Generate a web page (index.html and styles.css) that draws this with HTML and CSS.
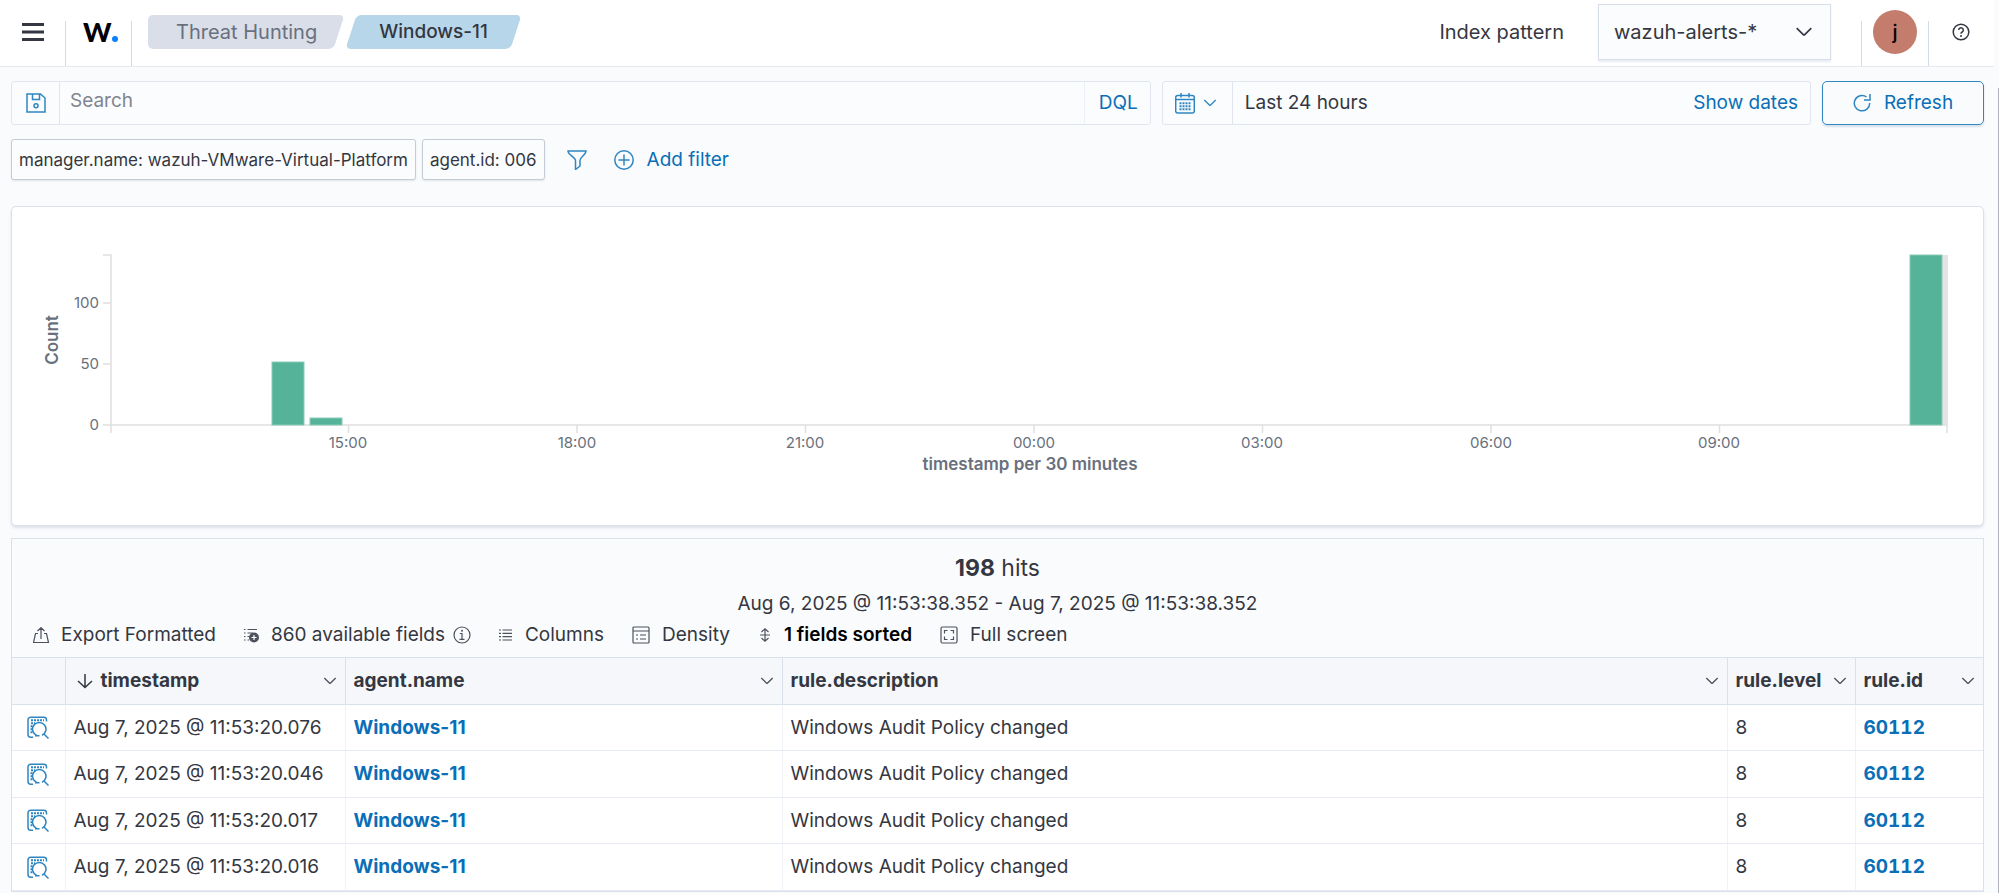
FILE: index.html
```html
<!DOCTYPE html>
<html lang="en">

<head>
    <meta charset="UTF-8">
    <meta name="viewport" content="width=device-width, initial-scale=1.0">
    <title>Threat Hunting</title>
    <link rel="stylesheet" href="styles.css">
</head>

<body>
    <!-- shared icons -->
    <svg class="sprite" aria-hidden="true">
        <symbol id="chevron" viewBox="0 0 16 16">
            <path d="M1.500 4.500L7.600 10.600a.6.6 0 0 0 .8 0L14.500 4.500" />
        </symbol>
        <symbol id="inspect" viewBox="0 0 22 23">
            <path d="M19.500 5.500V4a2.700 2.700 0 0 0-2.700-2.700H3.700A2.700 2.700 0 0 0 1 4v14.500A2.700 2.700 0 0 0 3.700 21.200H6" />
            <path class="dots" d="M4 4.300h13M4 7.300h4M3.500 10.300h2M3.500 13.300h2M3.500 16.300h2" />
            <path d="M9.500 19.300a6.700 6.700 0 1 1 5.500 0M8 19.800h4.500M17 18l4.500 4.500" />
        </symbol>
    </svg>

    <header class="topbar">
        <button class="menu-btn" aria-label="Menu">
            <svg width="22" height="18" viewBox="0 0 22 18"><path d="M0 1.500h22M0 9h22M0 16.500h22" /></svg>
        </button>
        <a class="logo" href="#">W<span></span></a>
        <nav class="crumbs">
            <a class="crumb crumb-first" href="#">Threat Hunting</a>
            <a class="crumb crumb-last" href="#">Windows-11</a>
        </nav>
        <label class="pattern-label" for="pattern">Index pattern</label>
        <div class="pattern">
            <select id="pattern">
                <option>wazuh-alerts-*</option>
            </select>
            <svg class="chevron" width="18" height="18"><use href="#chevron" /></svg>
        </div>
        <div class="user">
            <button class="avatar">j</button>
        </div>
        <button class="help" aria-label="Help">
            <svg width="18" height="18" viewBox="0 0 18 18">
                <circle cx="9" cy="9" r="7.800" />
                <path d="M6.700 7a2.300 2.300 0 1 1 3.500 2c-.8.500-1.200.9-1.200 1.800" />
                <circle class="dot" cx="9" cy="13" r="1" />
            </svg>
        </button>
    </header>

    <main>
        <div class="query">
            <div class="search">
                <button class="save" aria-label="Saved queries">
                    <svg width="20" height="20" viewBox="0 0 20 20">
                        <path d="M1 1h13.500l4.500 4v14H1zM6.500 1v5.500h7V1" />
                        <circle cx="10" cy="12.800" r="2" />
                    </svg>
                </button>
                <input type="text" placeholder="Search" aria-label="Search">
                <button class="dql">DQL</button>
            </div>
            <div class="dates">
                <button class="quick" aria-label="Date quick select">
                    <svg width="20" height="21" viewBox="0 0 20 21">
                        <rect x=".7" y="2.500" width="18.600" height="17.600" rx="2" />
                        <path d="M1 6.500h18M6 0v4.500M14 0v4.500" />
                        <path class="dots" d="M4.500 10.200h11M4.500 13.200h11M4.500 16.200h11" />
                    </svg>
                    <svg class="chevron" width="14" height="14"><use href="#chevron" /></svg>
                </button>
                <button class="range">Last 24 hours</button>
                <button class="show">Show dates</button>
            </div>
            <button class="refresh">
                <svg width="18" height="18" viewBox="0 0 18 18">
                    <path d="M13.500 2.900A7.700 7.700 0 1 0 16.700 9M17 0v6h-6" />
                </svg>
                Refresh
            </button>
        </div>

        <div class="filters">
            <button class="pill">manager.name: wazuh-VMware-Virtual-Platform</button>
            <button class="pill">agent.id: 006</button>
            <button class="funnel" aria-label="Filter options">
                <svg width="20" height="20" viewBox="0 0 20 20">
                    <path d="M1 1h18c0 4-6 6-6 9.500V16l-4.500 3.500v-9C8.500 7 1 5 1 1z" />
                </svg>
            </button>
            <button class="add">
                <svg width="20" height="20" viewBox="0 0 20 20">
                    <circle cx="10" cy="10" r="9.200" />
                    <path d="M4.500 10h11M10 4.500v11" />
                </svg>
                Add filter
            </button>
        </div>

        <section class="panel chart">
            <svg viewBox="0 0 1971 318" role="img" aria-label="Count, timestamp per 30 minutes">
                <rect class="partial" x="1930" y="48" width="6" height="170" />
                <g class="axis">
                    <path d="M91 48h8v178M91 96h8M91 157h8M91 218h1844v8" />
                    <path d="M336.500 218v8M565 218v8M793.500 218v8M1022 218v8M1250.500 218v8M1479 218v8M1707.500 218v8" />
                </g>
                <g class="bars">
                    <rect x="260" y="155" width="32" height="63" />
                    <rect x="298" y="211" width="32" height="7" />
                    <rect x="1898" y="48" width="32" height="170" />
                </g>
                <g class="ylabels">
                    <text x="87" y="101">100</text>
                    <text x="87" y="162">50</text>
                    <text x="87" y="223">0</text>
                </g>
                <g class="xlabels">
                    <text x="336" y="241">15:00</text>
                    <text x="565" y="241">18:00</text>
                    <text x="793" y="241">21:00</text>
                    <text x="1022" y="241">00:00</text>
                    <text x="1250" y="241">03:00</text>
                    <text x="1479" y="241">06:00</text>
                    <text x="1707" y="241">09:00</text>
                </g>
                <text class="title" x="1018" y="263">timestamp per 30 minutes</text>
                <text class="title" transform="translate(46 133) rotate(-90)">Count</text>
            </svg>
        </section>

        <section class="results">
            <div class="hits"><strong>198</strong> hits</div>
            <div class="period">Aug 6, 2025 @ 11:53:38.352 - Aug 7, 2025 @ 11:53:38.352</div>

            <div class="toolbar">
                <button>
                    <svg width="16" height="16" viewBox="0 0 16 16"><path d="M5 6.500H2.500l-2 9h15l-2-9H11M8 12V1M4.500 4L8 .7 11.500 4" /></svg>
                    Export Formatted
                </button>
                <button>
                    <svg width="15" height="16" viewBox="0 0 15 16">
                        <path d="M0 2.500h1.500M3.500 2.500H13M0 6h1.500M3.500 6h5M0 9.500h1.500M3.500 9.500H5M0 13h1.500M3.500 13H5" />
                        <circle class="solid" cx="10" cy="10.500" r="5" />
                        <path class="plus" d="M10 8v5M7.500 10.500h5" />
                    </svg>
                    860 available fields
                    <svg class="info" width="18" height="18" viewBox="0 0 18 18">
                        <circle cx="9" cy="9" r="8" />
                        <path d="M6.800 7.500H9v5.500M6.500 13.300h5" />
                        <circle class="solid" cx="9" cy="4.800" r="1" />
                    </svg>
                </button>
                <button>
                    <svg width="14" height="16" viewBox="0 0 14 16"><path d="M0 3h2M3.500 3H13M0 6.300h2M3.500 6.300H13M0 9.600h2M3.500 9.600H13M0 13h2M3.500 13H13" /></svg>
                    Columns
                </button>
                <button>
                    <svg width="18" height="18" viewBox="0 0 18 18">
                        <rect x="1" y="1" width="16" height="16" rx="1" />
                        <path d="M1 5h16M4 9h2M8 9h6M4 13h2M8 13h6" />
                    </svg>
                    Density
                </button>
                <button class="sorted">
                    <svg width="14" height="16" viewBox="0 0 14 16"><path d="M7 2v12M3.500 5L7 1.700 10.500 5M3.500 11L7 14.300l3.500-3.300M2 8h10" /></svg>
                    1 fields sorted
                </button>
                <button>
                    <svg width="18" height="18" viewBox="0 0 18 18">
                        <rect x="1" y="1" width="16" height="16" rx="1.500" />
                        <path d="M4.500 7.500v-3h3M10.500 4.500h3v3M13.500 10.500v3h-3M7.500 13.500h-3v-3" />
                    </svg>
                    Full screen
                </button>
            </div>

            <table>
                <colgroup>
                    <col class="c-open">
                    <col class="c-time">
                    <col class="c-agent">
                    <col>
                    <col class="c-short">
                    <col class="c-short">
                </colgroup>
                <thead>
                    <tr>
                        <th></th>
                        <th>
                            <div class="head">
                                <svg class="sort" width="16" height="16" viewBox="0 0 16 16"><path d="M8 1v13.500M1 8l7 6.500L15 8" /></svg>
                                <span>timestamp</span>
                                <svg class="chevron" width="14" height="14"><use href="#chevron" /></svg>
                            </div>
                        </th>
                        <th><div class="head"><span>agent.name</span><svg class="chevron" width="14" height="14"><use href="#chevron" /></svg></div></th>
                        <th><div class="head"><span>rule.description</span><svg class="chevron" width="14" height="14"><use href="#chevron" /></svg></div></th>
                        <th><div class="head"><span>rule.level</span><svg class="chevron" width="14" height="14"><use href="#chevron" /></svg></div></th>
                        <th><div class="head"><span>rule.id</span><svg class="chevron" width="14" height="14"><use href="#chevron" /></svg></div></th>
                    </tr>
                </thead>
                <tbody>
                    <tr>
                        <td><button class="open" aria-label="Inspect document"><svg width="22" height="23"><use href="#inspect" /></svg></button></td>
                        <td>Aug 7, 2025 @ 11:53:20.076</td>
                        <td><a href="#">Windows-11</a></td>
                        <td>Windows Audit Policy changed</td>
                        <td>8</td>
                        <td class="num"><a href="#">60112</a></td>
                    </tr>
                    <tr>
                        <td><button class="open" aria-label="Inspect document"><svg width="22" height="23"><use href="#inspect" /></svg></button></td>
                        <td>Aug 7, 2025 @ 11:53:20.046</td>
                        <td><a href="#">Windows-11</a></td>
                        <td>Windows Audit Policy changed</td>
                        <td>8</td>
                        <td class="num"><a href="#">60112</a></td>
                    </tr>
                    <tr>
                        <td><button class="open" aria-label="Inspect document"><svg width="22" height="23"><use href="#inspect" /></svg></button></td>
                        <td>Aug 7, 2025 @ 11:53:20.017</td>
                        <td><a href="#">Windows-11</a></td>
                        <td>Windows Audit Policy changed</td>
                        <td>8</td>
                        <td class="num"><a href="#">60112</a></td>
                    </tr>
                    <tr>
                        <td><button class="open" aria-label="Inspect document"><svg width="22" height="23"><use href="#inspect" /></svg></button></td>
                        <td>Aug 7, 2025 @ 11:53:20.016</td>
                        <td><a href="#">Windows-11</a></td>
                        <td>Windows Audit Policy changed</td>
                        <td>8</td>
                        <td class="num"><a href="#">60112</a></td>
                    </tr>
                </tbody>
            </table>
        </section>
    </main>
    <div class="scrollbar"></div>
</body>

</html>
```

FILE: styles.css
```css
* {
    box-sizing: border-box;
}

body {
    margin: 0;
    padding-right: 5px;
    background-color: #fafbfd;
    color: #343741;
    font-family: Inter, "Liberation Sans", sans-serif;
    font-size: 19px;
    line-height: 28px;
}

button,
input,
select {
    margin: 0;
    padding: 0;
    border: 0;
    background: none;
    color: inherit;
    font: inherit;
}

button {
    display: flex;
    align-items: center;
    white-space: nowrap;
}

a {
    color: #0a6fb7;
    text-decoration: none;
}

svg {
    fill: none;
    stroke: currentColor;
    stroke-width: 1.5;
    flex-shrink: 0;
}

.sprite {
    display: none;
}

.dots {
    stroke-dasharray: 2 1;
    stroke-width: 2;
}

/* top bar */

.topbar {
    display: flex;
    align-items: center;
    height: 67px;
    padding: 0 24px 2px 22px;
    background-color: white;
    border-bottom: 1px solid #e4e8f1;
    font-size: 20px;
}

.menu-btn {
    margin-right: 21px;
}

.menu-btn svg {
    stroke-width: 3;
}

.logo {
    align-self: flex-end;
    height: 45px;
    width: 67px;
    margin-bottom: -2px;
    padding-left: 17px;
    border: solid #d3dae6;
    border-width: 0 1px;
    color: black;
    font-family: Lato, sans-serif;
    font-size: 27px;
    font-weight: 900;
    line-height: 22px;
}

.logo span {
    display: inline-block;
    width: 6px;
    height: 6px;
    border-radius: 50%;
    background-color: #0a80ff;
}

.crumbs {
    display: flex;
    gap: 12px;
    margin-left: 16px;
    margin-right: auto;
}

.crumb {
    position: relative;
    z-index: 0;
    height: 34px;
    padding: 0 22px 0 28px;
    color: #69707d;
    line-height: 34px;
}

.crumb::before,
.crumb-first::after {
    content: "";
    position: absolute;
    z-index: -1;
    inset: 0;
    border-radius: 5px;
    background-color: #d9dee9;
    transform: skewX(-18deg);
}

.crumb-first::before {
    left: 28px;
}

.crumb-first::after {
    right: 50%;
    transform: none;
}

.crumb-last {
    padding: 0 28px;
    color: #343741;
    font-size: 19px;
    font-weight: 500;
}

.crumb-last::before {
    background-color: #b8d6e9;
}

.pattern-label {
    margin-right: 34px;
}

.pattern {
    position: relative;
    width: 233px;
    height: 56px;
    margin-right: 30px;
    border: 1px solid #d9dfea;
    background-color: #fbfcfd;
    box-shadow: 0 2px 2px #e9ecf3;
}

.pattern select {
    width: 100%;
    height: 100%;
    padding-left: 15px;
    appearance: none;
}

.pattern svg {
    position: absolute;
    right: 17px;
    top: 18px;
    pointer-events: none;
}

.user {
    display: flex;
    align-self: flex-end;
    justify-content: center;
    width: 68px;
    height: 45px;
    margin-bottom: -2px;
    border: solid #d3dae6;
    border-width: 0 1px;
}

.avatar {
    justify-content: center;
    width: 44px;
    height: 44px;
    margin-top: -11px;
    border-radius: 50%;
    background-color: #c47c6c;
    color: black;
    font-weight: 500;
}

.help {
    margin-left: 23px;
}

.help .dot,
.solid {
    fill: currentColor;
    stroke: none;
}

/* query bar and filters */

main {
    padding: 14px 10px 0 11px;
}

.query {
    display: flex;
    gap: 11px;
}

.search,
.dates {
    display: flex;
    height: 44px;
    border: 1px solid #e1e5ee;
    border-radius: 3px;
    background-color: #fbfcfd;
}

.search {
    flex: 1139;
}

.search input {
    flex: 1;
    min-width: 0;
    padding: 0 10px 4px;
}

.search input::placeholder {
    color: #808591;
    opacity: 1;
}

.save {
    width: 48px;
    justify-content: center;
    border-right: 1px solid #e1e5ee;
    color: #2f86c1;
}

.dql {
    padding: 0 12px 0 14px;
    border-left: 1px solid #eceff5;
    color: #0a6fb7;
}

.dates {
    flex: 648;
}

.quick {
    width: 70px;
    gap: 8px;
    padding-left: 12px;
    border-right: 1px solid #e1e5ee;
    color: #2f86c1;
}

.range {
    flex: 1;
    padding-left: 12px;
}

.show {
    padding: 0 12px;
    color: #0a6fb7;
}

.refresh {
    justify-content: center;
    gap: 13px;
    width: 162px;
    height: 44px;
    border: 1px solid #2f86c1;
    border-radius: 5px;
    box-shadow: 0 2px 2px #d5e1ec;
    color: #0a6fb7;
}

.refresh svg,
.funnel svg,
.add svg {
    color: #2f86c1;
}

.filters {
    display: flex;
    align-items: center;
    gap: 6px;
    margin-top: 14px;
    height: 41px;
}

.pill {
    height: 41px;
    padding: 0 7px;
    border: 1px solid #c6ccd6;
    border-radius: 3px;
    background-color: #fbfcfd;
    box-shadow: 0 1px 2px #dfe3ea;
    font-size: 17px;
}

.funnel,
.add {
    color: #0a6fb7;
}

.funnel {
    margin: 0 21px 0 16px;
}

.add {
    gap: 13px;
}

/* histogram */

.panel {
    margin-top: 26px;
    border: 1px solid #dbe1ec;
    border-radius: 5px;
    background-color: white;
    box-shadow: 0 2px 3px #dde2ea;
}

.chart svg {
    display: block;
    width: 100%;
}

.chart text {
    fill: #69707d;
    stroke: none;
    font-size: 15px;
}

.chart .ylabels text {
    text-anchor: end;
}

.chart .xlabels text {
    text-anchor: middle;
}

.chart .title {
    font-size: 17px;
    font-weight: 600;
    text-anchor: middle;
}

.axis {
    stroke: #e0e0e0;
}

.bars {
    fill: #54b399;
    stroke: #8ccbb9;
    stroke-width: 1;
}

.partial {
    fill: #e4e4e4;
    stroke: none;
}

/* results */

.results {
    margin-top: 12px;
    border: 1px solid #dbe1ec;
}

.hits {
    margin-top: 15px;
    font-size: 23px;
    text-align: center;
}

.period {
    margin-top: 8px;
    text-align: center;
}

.toolbar {
    display: flex;
    gap: 28px;
    height: 39px;
    padding: 0 21px 6px;
}

.toolbar button {
    gap: 12px;
}

.toolbar svg {
    color: #4c515d;
    stroke-width: 1.2;
}

.toolbar .info {
    margin-left: -4px;
}

.toolbar .plus {
    stroke: white;
}

.toolbar .sorted {
    color: black;
    font-weight: 600;
}

table {
    width: 100%;
    border-collapse: collapse;
    table-layout: fixed;
}

.c-open {
    width: 53px;
}

.c-time {
    width: 280px;
}

.c-agent {
    width: 437px;
}

.c-short {
    width: 128px;
}

th,
td {
    height: 46px;
    padding: 0 8px;
    border-left: 1px solid #f0f2f7;
    border-bottom: 1px solid #e6eaf2;
    text-align: left;
    white-space: nowrap;
}

th {
    height: 47px;
    border: 1px solid #dbe1ec;
    border-right: 0;
    background-color: #f5f7fa;
    font-weight: 700;
}

th:first-child,
td:first-child {
    border-left: 0;
}

td {
    background-color: white;
}

td a {
    font-weight: 700;
}

.num {
    font-variant-numeric: tabular-nums;
}

tr:nth-child(even) td {
    height: 47px;
}

.head {
    display: flex;
    align-items: center;
    gap: 8px;
}

.head .sort {
    margin-left: 3px;
}

.head .chevron {
    margin-left: auto;
    color: #4c515d;
}

.open {
    margin: 0 auto;
    color: #2f86c1;
}

.scrollbar {
    position: fixed;
    top: 88px;
    right: 0;
    bottom: 0;
    width: 1px;
    background-color: #b0b2bf;
}
```
